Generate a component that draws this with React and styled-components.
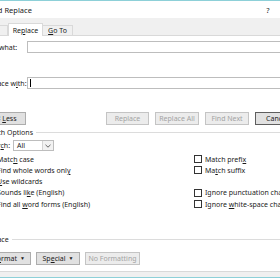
import styled, { createGlobalStyle } from 'styled-components';

const GlobalStyle = createGlobalStyle`
  html, body { margin: 0; padding: 0; background: #fff; }
  body { font-family: "Noto Sans", "Open Sans", sans-serif; }
`;

const Screen = styled.div`
  width: 280px;
  height: 280px;
  overflow: hidden;
  background: #fff;
`;

const Dialog = styled.div`
  margin-left: -40px;
  width: 380px;
  border-top: 1px solid #8dd0d8;
  font-size: 7px;
  color: #1b1b1b;
`;

const TitleBar = styled.div`
  height: 17px;
  display: flex;
  align-items: center;
  padding-left: 12px;
  font-size: 7.5px;
  .help{
    margin-left: auto;
    width: 12px;
    text-align: center;
    margin-right: 20px;
  }
  .close{
    width: 46px;
    text-align: center;
  }
`;

const TabStrip = styled.div`
  height: 17px;
  background: #f0f0f0;
  display: flex;
  align-items: flex-end;
  padding-left: 16px;
`;

const Tab = styled.div`
  width: ${p => p.w}px;
  height: ${p => p.active ? 13 : 10}px;
  margin-bottom: ${p => p.active ? -1 : 0}px;
  background: ${p => p.active ? '#fff' : '#f0f0f0'};
  border: 1px solid #d9d9d9;
  border-bottom: none;
  border-left: ${p => p.noLeft ? 'none' : '1px solid #d9d9d9'};
  box-sizing: border-box;
  display: flex;
  align-items: center;
  justify-content: center;
  position: relative;
  z-index: ${p => p.active ? 1 : 0};
`;

const TabPage = styled.div`
  border-top: 1px solid #d9d9d9;
  border-bottom: 1px solid #d9d9d9;
  background: #fff;
  padding: 5px 41px 6px 23px;
`;

const FieldRow = styled.div`
  display: flex;
  align-items: center;
  height: 12px;
  margin-top: ${p => p.mt || 0}px;
`;

const FieldLabel = styled.div`
  width: 44px;
  white-space: nowrap;
`;

const Input = styled.div`
  flex: 1;
  height: 12px;
  box-sizing: border-box;
  border: 1px solid #bdbdbd;
  background: #fff;
  display: flex;
  align-items: center;
  padding-left: 2px;
`;

const Caret = styled.span`
  width: 1px;
  height: 8px;
  background: #000;
`;

const ButtonRow = styled.div`
  display: flex;
  align-items: center;
  margin-top: ${p => p.mt || 0}px;
  margin-left: ${p => p.ml || 0}px;
  gap: ${p => p.gap || 0}px;
  .push{ margin-left: auto; display: flex; gap: 6px; }
`;

const Button = styled.div`
  width: ${p => p.w || 43}px;
  height: 13px;
  box-sizing: border-box;
  border: 1px solid ${p => p.def ? '#5e5e5e' : p.disabled ? '#c4c4c4' : '#adadad'};
  background: ${p => p.disabled ? '#ececec' : '#e1e1e1'};
  color: ${p => p.disabled ? '#a3a3a3' : '#1b1b1b'};
  display: flex;
  align-items: center;
  justify-content: center;
  white-space: pre;
  .arrow{ font-size: 5px; margin-left: 3px; }
`;

const Key = styled.span`
  text-decoration: underline;
`;

const GroupHeading = styled.div`
  display: flex;
  align-items: center;
  height: 8px;
  margin-top: ${p => p.mt || 0}px;
  white-space: nowrap;
  &::after{
    content: '';
    flex: 1;
    height: 1px;
    background: #dcdcdc;
    margin-left: 3px;
  }
`;

const Options = styled.div`
  padding-left: 3px;
`;

const SearchRow = styled.div`
  display: flex;
  align-items: center;
  height: 11px;
  margin-top: 4px;
  .lbl{ width: 27px; }
`;

const Select = styled.div`
  width: 41px;
  height: 11px;
  box-sizing: border-box;
  border: 1px solid #bdbdbd;
  display: flex;
  align-items: center;
  .val{ flex: 1; padding-left: 3px; }
  .btn{
    width: 10px;
    height: 100%;
    border-left: 1px solid #d4d4d4;
    background: #f2f2f2;
    display: flex;
    align-items: center;
    justify-content: center;
  }
`;

const CheckGrid = styled.div`
  display: grid;
  grid-template-columns: 208px 1fr;
  grid-auto-rows: 11.25px;
  margin-top: 2.5px;
`;

const Check = styled.div`
  display: flex;
  align-items: center;
  white-space: pre;
  &::before{
    content: '';
    width: 8px;
    height: 8px;
    box-sizing: border-box;
    border: 1px solid #333;
    background: #fff;
    margin-right: 3px;
    flex: none;
  }
`;

const Footer = styled.div`
  height: 5px;
  background: #f0f0f0;
  border-bottom: 1px solid #8dd0d8;
`;

export default function App() {
  return (
    <Screen>
      <GlobalStyle />
      <Dialog>
        <TitleBar>
          <span>Find and Replace</span>
          <span className="help">?</span>
          <span className="close">✕</span>
        </TitleBar>
        <TabStrip>
          <Tab w={32}><span>Fin<Key>d</Key></span></Tab>
          <Tab w={35} active><span>Re<Key>p</Key>lace</span></Tab>
          <Tab w={30} noLeft><span><Key>G</Key>o To</span></Tab>
        </TabStrip>
        <TabPage>
          <FieldRow>
            <FieldLabel>Fi<Key>n</Key>d what:</FieldLabel>
            <Input />
          </FieldRow>
          <FieldRow mt={24}>
            <FieldLabel>Replace w<Key>i</Key>th:</FieldLabel>
            <Input><Caret /></Input>
          </FieldRow>
          <ButtonRow mt={23}>
            <Button><span>&lt;&lt; <Key>L</Key>ess</span></Button>
            <div className="push">
              <Button disabled>Replace</Button>
              <Button disabled w={44}>Replace All</Button>
              <Button disabled w={44}>Find Next</Button>
              <Button def w={44}>Cancel</Button>
            </div>
          </ButtonRow>
          <GroupHeading mt={3}>Search Options</GroupHeading>
          <Options>
            <SearchRow>
              <span className="lbl">Sear<Key>c</Key>h:</span>
              <Select>
                <span className="val">All</span>
                <span className="btn">
                  <svg width="6" height="4" viewBox="0 0 6 4">
                    <path d="M0.5 0.8 L3 3.2 L5.5 0.8" fill="none" stroke="#555" strokeWidth="0.9" />
                  </svg>
                </span>
              </Select>
            </SearchRow>
            <CheckGrid>
              <Check><span>Matc<Key>h</Key> case</span></Check>
              <Check><span>Match prefi<Key>x</Key></span></Check>
              <Check><span>Find whole words onl<Key>y</Key></span></Check>
              <Check><span>Ma<Key>t</Key>ch suffix</span></Check>
              <Check><span><Key>U</Key>se wildcards</span></Check>
              <div />
              <Check><span>Sounds li<Key>k</Key>e (English)</span></Check>
              <Check><span>Ignore punctuation character<Key>s</Key></span></Check>
              <Check><span>Find all <Key>w</Key>ord forms (English)</span></Check>
              <Check><span>Ignore <Key>w</Key>hite-space characters</span></Check>
            </CheckGrid>
          </Options>
          <GroupHeading mt={26}>Replace</GroupHeading>
          <ButtonRow mt={8} ml={4} gap={5}>
            <Button w={44}><span>F<Key>o</Key>rmat</span><span className="arrow">▼</span></Button>
            <Button w={44}><span>Sp<Key>e</Key>cial</span><span className="arrow">▼</span></Button>
            <Button disabled w={55}>No Formatting</Button>
          </ButtonRow>
        </TabPage>
        <Footer />
      </Dialog>
    </Screen>
  );
}
